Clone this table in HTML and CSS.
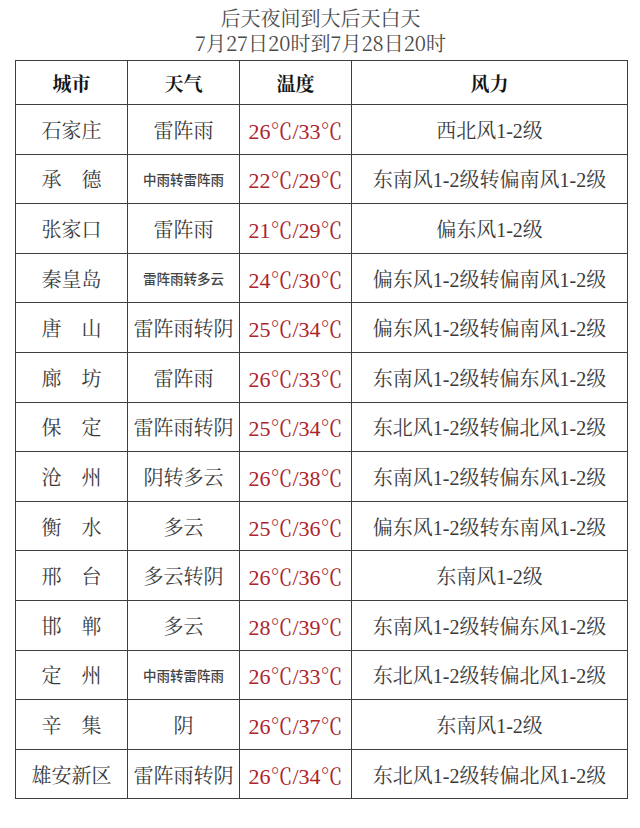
FILE: index.html
```html
<!DOCTYPE html>
<html lang="zh">
<head>
<meta charset="utf-8">
<link rel="stylesheet" href="styles.css">
</head>
<body>
<div class="page">
  <div class="title">
    <div class="title-line">后天夜间到大后天白天</div>
    <div class="title-line">7月27日20时到7月28日20时</div>
  </div>
  <table class="forecast">
    <colgroup>
      <col class="c-city"><col class="c-wx"><col class="c-temp"><col class="c-wind">
    </colgroup>
    <thead>
      <tr class="head"><th>城市</th><th>天气</th><th>温度</th><th>风力</th></tr>
    </thead>
    <tbody>
      <tr><td>石家庄</td><td>雷阵雨</td><td class="temp">26℃/33℃</td><td>西北风1-2级</td></tr>
      <tr><td>承　德</td><td class="small">中雨转雷阵雨</td><td class="temp">22℃/29℃</td><td>东南风1-2级转偏南风1-2级</td></tr>
      <tr><td>张家口</td><td>雷阵雨</td><td class="temp">21℃/29℃</td><td>偏东风1-2级</td></tr>
      <tr><td>秦皇岛</td><td class="small">雷阵雨转多云</td><td class="temp">24℃/30℃</td><td>偏东风1-2级转偏南风1-2级</td></tr>
      <tr><td>唐　山</td><td>雷阵雨转阴</td><td class="temp">25℃/34℃</td><td>偏东风1-2级转偏南风1-2级</td></tr>
      <tr><td>廊　坊</td><td>雷阵雨</td><td class="temp">26℃/33℃</td><td>东南风1-2级转偏东风1-2级</td></tr>
      <tr><td>保　定</td><td>雷阵雨转阴</td><td class="temp">25℃/34℃</td><td>东北风1-2级转偏北风1-2级</td></tr>
      <tr><td>沧　州</td><td>阴转多云</td><td class="temp">26℃/38℃</td><td>东南风1-2级转偏东风1-2级</td></tr>
      <tr><td>衡　水</td><td>多云</td><td class="temp">25℃/36℃</td><td>偏东风1-2级转东南风1-2级</td></tr>
      <tr><td>邢　台</td><td>多云转阴</td><td class="temp">26℃/36℃</td><td>东南风1-2级</td></tr>
      <tr><td>邯　郸</td><td>多云</td><td class="temp">28℃/39℃</td><td>东南风1-2级转偏东风1-2级</td></tr>
      <tr><td>定　州</td><td class="small">中雨转雷阵雨</td><td class="temp">26℃/33℃</td><td>东北风1-2级转偏北风1-2级</td></tr>
      <tr><td>辛　集</td><td>阴</td><td class="temp">26℃/37℃</td><td>东南风1-2级</td></tr>
      <tr><td>雄安新区</td><td>雷阵雨转阴</td><td class="temp">26℃/34℃</td><td>东北风1-2级转偏北风1-2级</td></tr>
    </tbody>
  </table>
</div>
</body>
</html>
```

FILE: styles.css
```css
html, body {
  margin: 0;
  padding: 0;
  background: #ffffff;
}

body {
  font-family: "Liberation Serif", "Noto Serif CJK SC", "Noto Sans CJK SC", serif;
  color: #3a3a3a;
}

.page {
  width: 640px;
  height: 828px;
  padding: 5px 0 0 15px;
  box-sizing: border-box;
}

.title {
  width: 611px;
  text-align: center;
  color: #4a4a4a;
  font-family: "Noto Serif CJK SC", "Liberation Serif", serif;
  font-size: 20px;
  line-height: 25px;
  margin-bottom: 5px;
}

.forecast {
  width: 612px;
  border-collapse: collapse;
  table-layout: fixed;
}

.c-city { width: 112px; }
.c-wx { width: 112px; }
.c-temp { width: 112px; }
.c-wind { width: 276px; }

.forecast th,
.forecast td {
  border: 1px solid #3e3e3e;
  text-align: center;
  vertical-align: middle;
  padding: 0;
  white-space: nowrap;
  font-size: 20px;
  font-weight: normal;
}

.forecast tr.head th {
  height: 43px;
  color: #151515;
  font-weight: bold;
  font-size: 19px;
}

.forecast tbody td {
  height: 48.6px;
}

.forecast td.small {
  font-family: "Noto Sans CJK SC", sans-serif;
  font-size: 13.5px;
  font-weight: 500;
  color: #444;
}

.forecast td.temp {
  color: #ad242b;
  font-size: 22px;
}
```
